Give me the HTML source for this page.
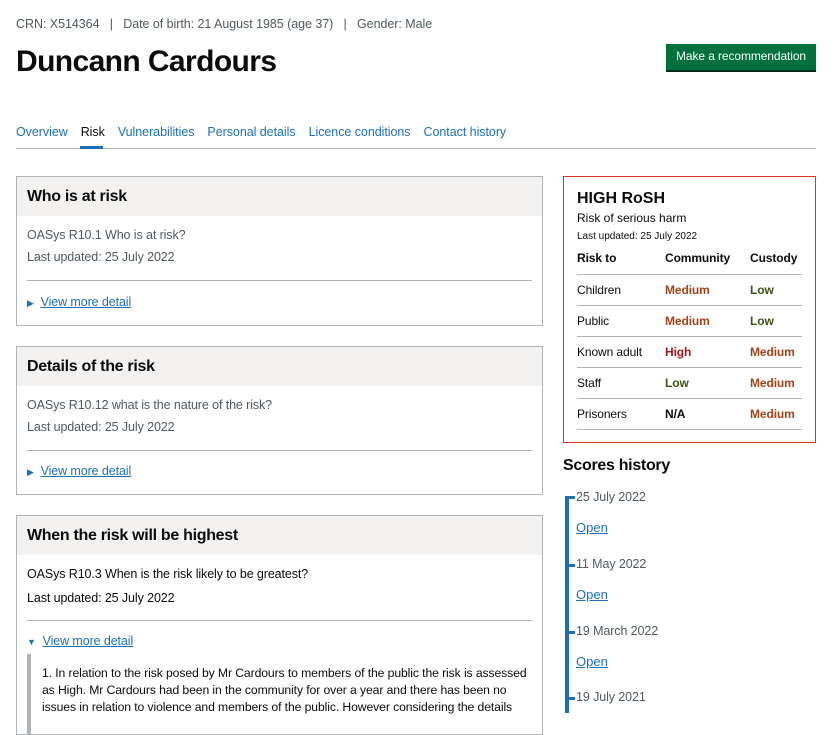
<!DOCTYPE html>
<html><head><style>
*{margin:0;padding:0;box-sizing:border-box}
body{width:836px;height:713px;overflow:hidden;background:#fff;font-family:"Liberation Sans",Arial,sans-serif;color:#0b0c0c;position:relative;font-size:13px}
.a{position:absolute;white-space:nowrap}
a,.lnk{color:#1d70b8;text-decoration:underline}
.meta{color:#505a5f;font-size:12.5px;letter-spacing:-0.05px}
.card{position:absolute;left:16px;width:527px;border:1px solid #b1b4b6}
.card .h{background:#f3f2f1;height:39px;padding:11px 10px;font-weight:bold;font-size:16px;letter-spacing:-0.3px}
.card p{position:absolute;left:10px;font-size:12.5px;color:#0b0c0c;letter-spacing:-0.1px}
.card .hr{position:absolute;left:10px;right:10px;height:1px;background:#b1b4b6}
.tri{color:#1d70b8;font-size:9px}
.rt td{font-size:12px;height:31px;border-bottom:1px solid #b1b4b6;padding:0;letter-spacing:-0.1px}
.med{color:#a0451a;font-weight:bold}.low{color:#3f5219;font-weight:bold}.hi{color:#a01a1a;font-weight:bold}
.dt{position:absolute;left:576px;color:#505a5f;font-size:12.5px;letter-spacing:-0.1px}
.tk{position:absolute;left:565px;width:10px;height:3px;background:#1d70b8}
</style></head><body>
<div class="a meta" style="left:16px;top:17px">CRN: X514364 &nbsp; | &nbsp; Date of birth: 21 August 1985 (age 37) &nbsp; | &nbsp; Gender: Male</div>
<div class="a" style="left:16px;top:45px;font-size:30px;font-weight:bold;letter-spacing:-0.6px">Duncann Cardours</div>
<div class="a" style="left:666px;top:44px;width:150px;height:26px;background:#00703c;box-shadow:0 2px 0 #002d18;color:#fff;font-size:12px;letter-spacing:-0.1px;text-align:center;line-height:24px">Make a recommendation</div>
<div class="a" style="left:16px;top:125px;font-size:12.5px;letter-spacing:-0.05px"><span style="color:#1d70b8">Overview</span><span style="margin-left:13px">Risk</span><span style="color:#1d70b8;margin-left:13px">Vulnerabilities</span><span style="color:#1d70b8;margin-left:13px">Personal details</span><span style="color:#1d70b8;margin-left:13px">Licence conditions</span><span style="color:#1d70b8;margin-left:13px">Contact history</span></div>
<div class="a" style="left:16px;top:148px;width:800px;height:1px;background:#b1b4b6"></div>
<div class="a" style="left:80px;top:146px;width:23px;height:3px;background:#1d70b8"></div>

<div class="card" style="top:176px;height:150px"><div class="h">Who is at risk</div>
<p style="top:51px;color:#505a5f">OASys R10.1 Who is at risk?</p><p style="top:73px;color:#505a5f">Last updated: 25 July 2022</p>
<div class="hr" style="top:103px"></div><p style="top:118px"><span class="tri">▶</span> &nbsp;<span class="lnk">View more detail</span></p></div>

<div class="card" style="top:346px;height:149px"><div class="h">Details of the risk</div>
<p style="top:51px;color:#505a5f">OASys R10.12 what is the nature of the risk?</p><p style="top:73px;color:#505a5f">Last updated: 25 July 2022</p>
<div class="hr" style="top:103px"></div><p style="top:117px"><span class="tri">▶</span> &nbsp;<span class="lnk">View more detail</span></p></div>

<div class="card" style="top:515px;height:220px"><div class="h">When the risk will be highest</div>
<p style="top:51px">OASys R10.3 When is the risk likely to be greatest?</p><p style="top:75px">Last updated: 25 July 2022</p>
<div class="hr" style="top:104px"></div><p style="top:118px"><span class="tri">▼</span> &nbsp;<span class="lnk">View more detail</span></p>
<div style="position:absolute;left:10px;top:138px;width:4px;height:80px;background:#b1b4b6"></div>
<p style="top:149px;left:25px;line-height:17px;font-size:12.2px;letter-spacing:-0.1px">1. In relation to the risk posed by Mr Cardours to members of the public the risk is assessed<br>as High. Mr Cardours had been in the community for over a year and there has been no<br>issues in relation to violence and members of the public. However considering the details</p></div>

<div class="a" style="left:563px;top:176px;width:253px;height:267px;border:1px solid #d4351c">
<div class="a" style="left:13px;top:13px;font-size:16px;font-weight:bold">HIGH RoSH</div>
<div class="a" style="left:13px;top:34px;font-size:12px">Risk of serious harm</div>
<div class="a" style="left:13px;top:54px;font-size:10px">Last updated: 25 July 2022</div>
<table class="rt" style="position:absolute;left:13px;top:66px;width:225px;border-collapse:collapse">
<tr><td style="width:88px;font-weight:bold">Risk to</td><td style="width:85px;font-weight:bold">Community</td><td style="font-weight:bold">Custody</td></tr>
<tr><td>Children</td><td class="med">Medium</td><td class="low">Low</td></tr>
<tr><td>Public</td><td class="med">Medium</td><td class="low">Low</td></tr>
<tr><td>Known adult</td><td class="hi">High</td><td class="med">Medium</td></tr>
<tr><td>Staff</td><td class="low">Low</td><td class="med">Medium</td></tr>
<tr><td>Prisoners</td><td style="font-weight:bold">N/A</td><td class="med">Medium</td></tr>
</table></div>

<div class="a" style="left:563px;top:457px;font-size:16px;font-weight:bold;letter-spacing:-0.3px">Scores history</div>
<div class="a" style="left:565px;top:496px;width:4px;height:217px;background:#1d70b8"></div>
<div class="tk" style="top:496px"></div><div class="dt" style="top:490px">25 July 2022</div><div class="a lnk" style="left:576px;top:520px">Open</div>
<div class="tk" style="top:564px"></div><div class="dt" style="top:557px">11 May 2022</div><div class="a lnk" style="left:576px;top:587px">Open</div>
<div class="tk" style="top:631px"></div><div class="dt" style="top:624px">19 March 2022</div><div class="a lnk" style="left:576px;top:654px">Open</div>
<div class="tk" style="top:697px"></div><div class="dt" style="top:690px">19 July 2021</div>
</body></html>
